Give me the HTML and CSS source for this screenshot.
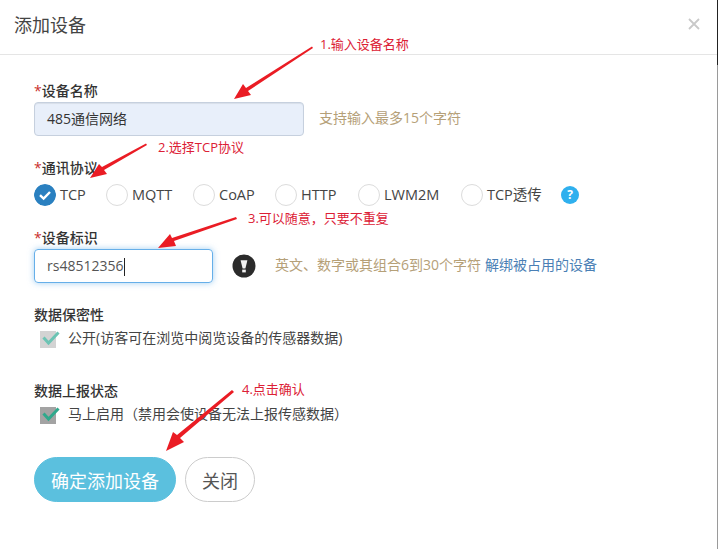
FILE: index.html
```html
<!DOCTYPE html>
<html lang="zh-CN">
<head>
<meta charset="utf-8">
<title>添加设备</title>
<link rel="stylesheet" href="styles.css">
</head>
<body>
<div class="modal">
  <header class="modal-head">
    <h1 class="modal-title">添加设备</h1>
    <svg class="close-x" width="12" height="12" viewBox="0 0 12 12"><path d="M1 1L11 11M11 1L1 11" stroke="#c9c9c9" stroke-width="1.8" fill="none"/></svg>
  </header>
  <form class="form">
    <div class="label name-label"><span class="req">*</span>设备名称</div>
    <div class="row">
      <div class="input filled">485通信网络</div>
      <span class="hint hint-name">支持输入最多15个字符</span>
    </div>
    <div class="label proto-label"><span class="req">*</span>通讯协议</div>
    <div class="radios">
      <span class="radio on w-tcp"><svg class="dot" width="22" height="22" viewBox="0 0 22 22"><circle cx="11" cy="11" r="11" fill="#2a80c0"/><path d="M6 11.2L9.6 14.6L16 8" stroke="#fff" stroke-width="2.4" fill="none"/></svg>TCP</span>
      <span class="radio w-mqtt"><i class="dot"></i>MQTT</span>
      <span class="radio w-coap"><i class="dot"></i>CoAP</span>
      <span class="radio w-http"><i class="dot"></i>HTTP</span>
      <span class="radio w-lwm"><i class="dot"></i>LWM2M</span>
      <span class="radio w-pass"><i class="dot"></i>TCP透传</span>
      <span class="help">?</span>
    </div>
    <div class="label id-label"><span class="req">*</span>设备标识</div>
    <div class="row">
      <div class="input focus">rs48512356<span class="caret"></span></div>
      <svg class="warn" width="24" height="24" viewBox="0 0 24 24"><circle cx="12" cy="12" r="11.5" fill="#2b2b2b"/><path d="M8.6 6.2H15.4L13.4 14.4H10.6Z" fill="#f2f2f2"/><rect x="10.2" y="15.6" width="3.6" height="2.8" fill="#f2f2f2"/></svg>
      <span class="hint hint-id">英文、数字或其组合6到30个字符</span>
      <a class="link">解绑被占用的设备</a>
    </div>
    <div class="label secret-label">数据保密性</div>
    <div class="check-row">
      <svg class="check" width="20" height="18" viewBox="0 0 20 18"><rect x="0" y="1" width="16" height="17" fill="#d3d3d3"/><path d="M3.5 7.5L8.5 13L18.5 2.5" stroke="#6cc4b4" stroke-width="3" fill="none"/></svg>
      <span>公开(访客可在浏览中阅览设备的传感器数据)</span>
    </div>
    <div class="label report-label">数据上报状态</div>
    <div class="check-row">
      <svg class="check" width="20" height="18" viewBox="0 0 20 18"><rect x="0" y="1" width="16" height="17" fill="#a3a3a3"/><path d="M3.5 7.5L8.5 13L18.5 2.5" stroke="#2fa98c" stroke-width="3" fill="none"/></svg>
      <span>马上启用（禁用会使设备无法上报传感数据）</span>
    </div>
    <div class="actions">
      <button type="button" class="btn primary">确定添加设备</button>
      <button type="button" class="btn ghost">关闭</button>
    </div>
  </form>
</div>

<div class="edge"></div>
<div class="note note-1">1.输入设备名称</div>
<div class="note note-2">2.选择TCP协议</div>
<div class="note note-3">3.可以随意，只要不重复</div>
<div class="note note-4">4.点击确认</div>
<svg class="arrows" width="718" height="549" viewBox="0 0 718 549">
  <g fill="#ea1c24">
    <path d="M312 46.5L313 48L248 91L251 95L234 99L243 84L246 88Z"/>
    <path d="M146 143.5L147 145L104 170L107 174L90 178L99 164L102 167Z"/>
    <path d="M236 217L237 219L174 241L176 246L158 248L170 234L172 238Z"/>
    <path d="M232 390L234 392L180 438L184 442L166 451L173 432L177 435Z"/>
  </g>
</svg>
</body>
</html>
```
FILE: styles.css
```css
* { box-sizing: border-box; }
html, body { margin: 0; padding: 0; }
body {
  width: 718px;
  height: 549px;
  overflow: hidden;
  background: #fff;
  position: relative;
  color: #333;
  font-family: "Open Sans", "Noto Sans CJK SC", sans-serif;
  font-size: 14px;
}
.modal { width: 718px; height: 549px; border-right: 1px solid #9a9a9a; }
.edge { position: absolute; right: 0; top: 0; width: 1px; height: 65px; background: #222; }
.modal-head {
  height: 55px;
  padding: 0 17px 0 14px;
  border-bottom: 1px solid #e5e5e5;
  display: flex;
  align-items: center;
  justify-content: space-between;
}
.modal-title { margin: 0 0 4px; font-size: 18px; font-weight: 400; color: #444; line-height: 24px; }
.close-x { margin-bottom: 6px; }
.form { padding: 0 0 0 34px; }
.label { font-size: 14px; font-weight: 500; color: #333; line-height: 18px; height: 18px; }
.req { color: #c9302c; }
.name-label { margin-top: 27px; margin-bottom: 2px; }
.proto-label { margin-top: 23px; margin-bottom: 7px; }
.id-label { margin-top: 23px; margin-bottom: 2px; }
.secret-label { margin-top: 23px; margin-bottom: 6px; }
.report-label { margin-top: 34px; margin-bottom: 6px; }
.row { display: flex; align-items: center; }
.input {
  height: 34px;
  border: 1px solid #ccd3dc;
  border-radius: 4px;
  padding-left: 12px;
  line-height: 32px;
  font-size: 14px;
  color: #333;
}
.input.filled { width: 270px; background: #e8effa; border-color: #c6d0de; box-shadow: inset 0 1px 1px rgba(0,0,0,.07); }
.input.focus { width: 179px; border-color: #66afe9; box-shadow: 0 0 6px rgba(102,175,233,.6); color: #555; display: flex; align-items: center; }
.caret { display: inline-block; width: 1px; height: 18px; background: #222; margin-top: 1px; margin-left: 1px; }
.hint { color: #b5a078; font-size: 14px; line-height: 18px; margin-bottom: 3px; }
.hint-name { margin-left: 15px; margin-bottom: 2px; }
.hint-id { margin-left: 19px; }
.link { color: #4a7fb5; font-size: 14px; line-height: 18px; margin-left: 4px; margin-bottom: 3px; }
.warn { margin-left: 19px; }
.radios { display: flex; align-items: center; height: 22px; }
.radio { display: flex; align-items: center; gap: 4px; font-size: 14.5px; color: #444; line-height: 22px; }
.radio .dot { display: block; width: 22px; height: 22px; border-radius: 50%; border: 1px solid #dcdcdc; flex: none; }
.radio svg.dot { border: 0; }
.w-tcp { width: 72px; }
.w-mqtt { width: 87px; }
.w-coap { width: 82px; }
.w-http { width: 83px; }
.w-lwm { width: 103px; }
.w-pass { width: 100px; }
.help {
  width: 18px; height: 18px; border-radius: 50%;
  background: #2fb0ee; color: #fff; font-size: 12px; font-weight: 700;
  display: flex; align-items: center; justify-content: center; line-height: 18px;
}
.check-row { display: flex; align-items: center; padding-left: 6px; font-size: 14px; color: #444; height: 18px; gap: 8px; }
.check-row span { line-height: 18px; margin-bottom: 3px; }
.check { flex: none; }
.actions { display: flex; gap: 9px; margin-top: 33px; }
.btn { height: 45px; border-radius: 23px; font-family: inherit; font-size: 18px; padding: 0; }
.primary { width: 142px; background: #5bc0de; border: 1px solid #5bc0de; color: #fff; }
.ghost { width: 70px; background: #fff; border: 1px solid #ccc; color: #555; }
.note { position: absolute; color: #dc2035; font-size: 13px; line-height: 16px; white-space: nowrap; }
.note-1 { left: 320px; top: 36px; }
.note-2 { left: 158px; top: 139px; }
.note-3 { left: 248px; top: 210px; }
.note-4 { left: 242px; top: 381px; }
.arrows { position: absolute; left: 0; top: 0; pointer-events: none; }
```
